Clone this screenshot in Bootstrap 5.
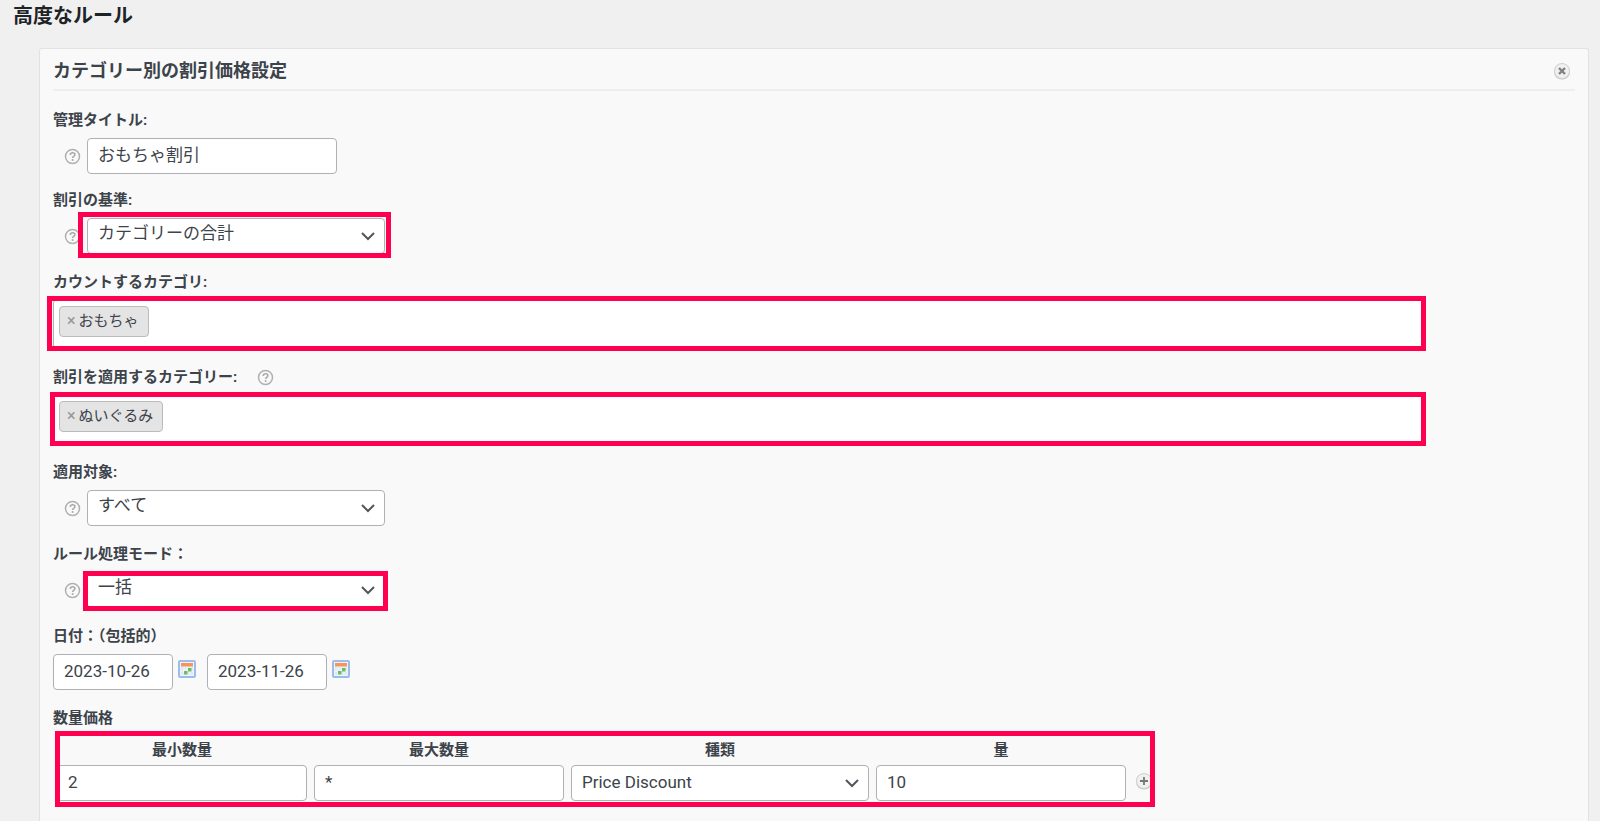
<!DOCTYPE html>
<html lang="ja">
<head>
<meta charset="utf-8">
<meta name="viewport" content="width=device-width, initial-scale=1">
<title>高度なルール</title>
<link href="https://cdn.jsdelivr.net/npm/bootstrap@5.3.0/dist/css/bootstrap.min.css" rel="stylesheet">
<style>
body{background:#f0f0f0;color:#3c434a;font-family:Roboto,"Noto Sans CJK JP",sans-serif;font-size:15px;line-height:24px}
.page-title{font-size:20px;line-height:32px;font-weight:700;color:#1d2327;padding-left:13px;margin-bottom:16px}
.rule-panel{background:#f9f9f9;border:1px solid #e2e2e2;border-bottom:0;border-radius:3px 3px 0 0;margin:0 11px 0 39px;padding:0 13px}
.rule-head{height:42px;padding-top:4px;border-bottom:2px solid #eee;margin-bottom:17px}
.rule-head h2{font-size:18px;line-height:28px;font-weight:700;margin:0}
.field{margin-bottom:16px}
.field-text{margin-bottom:14px}
.caption{display:block;font-weight:700;margin-bottom:6px}
.control-row{display:flex;align-items:center;gap:6px;padding-left:11px}
.form-control,.form-select{height:36px;border:1px solid #b0b1b4;border-radius:4px;padding:0 10px 2px;font-size:17px;line-height:32px;color:#3c434a;background-color:#fff}
.control-row .form-control,.control-row .form-select{padding-bottom:6px;line-height:28px}
.form-control{width:250px}
.form-select{width:298px;background-image:url("data:image/svg+xml,%3Csvg xmlns='http://www.w3.org/2000/svg' viewBox='0 0 14 10'%3E%3Cpath fill='none' stroke='%2350575e' stroke-width='2' d='M1 2l6 6 6-6'/%3E%3C/svg%3E");background-size:14px 10px;background-position:right 9px center}
.form-control.date{width:120px}
.help{width:17px;height:17px;flex:none;display:block}
.marked{position:relative}
.marker{position:absolute;border:5px solid #ff0050;pointer-events:none;z-index:2}
.marker-basis{inset:-6px -6px -4px -9px}
.marker-mode{inset:-1px -3px -3px -4px}
.marker-count{inset:-4px -4px -3px -7px}
.marker-target{inset:-3px -4px -3px -4px}
.marker-table{inset:-5px -2px -6px -2px}
.tokens{width:90%;height:50px;background:#fff;border:1px solid #b0b1b4;border-radius:4px;padding:6px 5px}
.tokens-caption{margin-bottom:5px}
.help-gap{gap:20px}
.token{display:inline-flex;align-items:center;height:31px;background:#e4e4e4;border:1px solid #bbb;border-radius:4px;padding:0 9px 2px 7px}
.token button,.icon-button{border:0;background:none;padding:0;display:block;line-height:1}
.token button{color:#999;font-size:16px;font-weight:500;margin-right:3px}
.date-button{margin:6px 11px 0 5px}
.qty{margin-left:4px}
.qty th{text-align:center;padding:2px 7px 3px 0}
.qty td{padding:0 7px 0 0}
.qty td:last-child{padding:0 0 5px 2px}
</style>
</head>
<body>
<svg width="0" height="0" class="position-absolute" aria-hidden="true">
<symbol id="i-help" viewBox="0 0 17 17"><circle cx="8.500" cy="8.500" r="7" fill="none" stroke="#b0b0b0" stroke-width="1.500"/><path d="M6.300 6.900C6.300 4 10.900 4.100 10.900 6.800 10.900 8.300 8.600 8.300 8.600 9.900" fill="none" stroke="#aaa" stroke-width="1.600"/><circle cx="8.600" cy="12" r="1" fill="#aaa"/></symbol>
<symbol id="i-cal" viewBox="0 0 18 18"><rect x="1" y="1" width="16" height="16" rx="1" fill="#edf4fc" stroke="#9dbcec" stroke-width="2"/><path d="M3 3h12v3.500H3z" fill="#f9935a"/><path d="M3 7h12v8H3z" fill="#dceaf7"/><path d="M6 7v8M9 7v8M12 7v8M3 11h12" stroke="#f5f9fd"/><path d="M10 8h3.500v3.500H10zM6 11h3.500v3.500H6z" fill="#6fbb62"/></symbol>
<symbol id="i-disc" viewBox="0 0 18 18"><circle cx="9" cy="9.500" r="8" fill="#c2c2c2"/><circle cx="9" cy="9" r="7.500" fill="#f0f0f0" stroke="#d2d2d2"/></symbol>
</svg>
<main class="d-flex flex-column min-vh-100">
<h1 class="page-title">高度なルール</h1>
<form class="rule-panel flex-grow-1">
<header class="rule-head d-flex justify-content-between align-items-center">
<h2>カテゴリー別の割引価格設定</h2>
<button type="button" class="icon-button me-1" aria-label="削除"><svg class="d-block" width="18" height="18" viewBox="0 0 18 18"><use href="#i-disc"/><path d="M6 6l6 6M12 6l-6 6" stroke="#808080" stroke-width="2.400"/></svg></button>
</header>
<div class="field field-text">
<label class="caption" for="title">管理タイトル:</label>
<div class="control-row"><svg class="help"><use href="#i-help"/></svg><input id="title" class="form-control" value="おもちゃ割引"></div>
</div>
<div class="field">
<label class="caption" for="basis">割引の基準:</label>
<div class="control-row"><svg class="help"><use href="#i-help"/></svg><div class="marked"><select id="basis" class="form-select"><option>カテゴリーの合計</option></select><span class="marker marker-basis"></span></div></div>
</div>
<div class="field">
<span class="caption tokens-caption">カウントするカテゴリ:</span>
<div class="tokens marked"><span class="token"><button type="button" aria-label="おもちゃを外す">×</button>おもちゃ</span><span class="marker marker-count"></span></div>
</div>
<div class="field">
<span class="caption tokens-caption help-gap d-flex align-items-center">割引を適用するカテゴリー:<svg class="help"><use href="#i-help"/></svg></span>
<div class="tokens marked"><span class="token"><button type="button" aria-label="ぬいぐるみを外す">×</button>ぬいぐるみ</span><span class="marker marker-target"></span></div>
</div>
<div class="field">
<label class="caption" for="applies">適用対象:</label>
<div class="control-row"><svg class="help"><use href="#i-help"/></svg><select id="applies" class="form-select"><option>すべて</option></select></div>
</div>
<div class="field">
<label class="caption" for="mode">ルール処理モード：</label>
<div class="control-row"><svg class="help"><use href="#i-help"/></svg><div class="marked"><select id="mode" class="form-select"><option>一括</option></select><span class="marker marker-mode"></span></div></div>
</div>
<div class="field">
<label class="caption" for="from">日付：（包括的）</label>
<div class="d-flex">
<input id="from" class="form-control date" value="2023-10-26">
<button type="button" class="icon-button date-button align-self-start" aria-label="開始日を選択"><svg class="d-block" width="18" height="18"><use href="#i-cal"/></svg></button>
<input class="form-control date" value="2023-11-26" aria-label="終了日">
<button type="button" class="icon-button date-button align-self-start" aria-label="終了日を選択"><svg class="d-block" width="18" height="18"><use href="#i-cal"/></svg></button>
</div>
</div>
<span class="caption">数量価格</span>
<div class="qty marked d-inline-block">
<table>
<thead><tr><th id="c1">最小数量</th><th id="c2">最大数量</th><th id="c3">種類</th><th id="c4">量</th><td></td></tr></thead>
<tbody><tr>
<td><input class="form-control" value="2" aria-labelledby="c1"></td>
<td><input class="form-control" value="*" aria-labelledby="c2"></td>
<td><select class="form-select" aria-labelledby="c3"><option>Price Discount</option></select></td>
<td><input class="form-control" value="10" aria-labelledby="c4"></td>
<td><button type="button" class="icon-button" aria-label="行を追加"><svg class="d-block" width="18" height="18" viewBox="0 0 18 18"><use href="#i-disc"/><path d="M9 5v8M5 9h8" stroke="#777" stroke-width="1.800"/></svg></button></td>
</tr></tbody>
</table>
<span class="marker marker-table"></span>
</div>
</form>
</main>
<script src="https://cdn.jsdelivr.net/npm/bootstrap@5.3.0/dist/js/bootstrap.bundle.min.js"></script>
</body>
</html>
